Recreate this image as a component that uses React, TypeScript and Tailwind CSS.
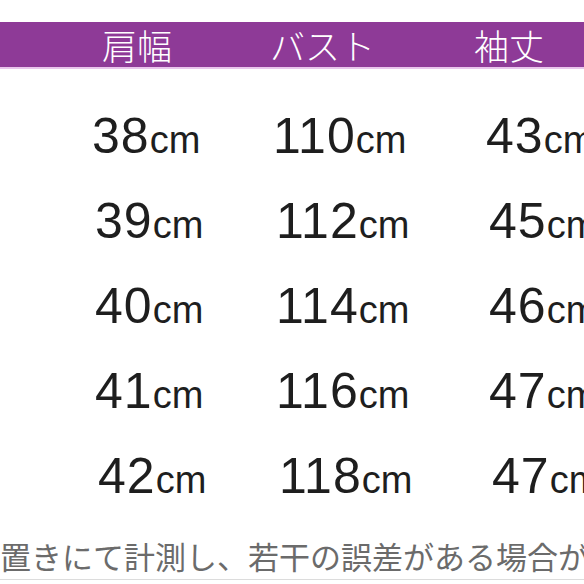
const rows = [
  { pad: 'pl-[92px]', shoulder: '38', bust: '110', sleeve: '43' },
  { pad: 'pl-[95px]', shoulder: '39', bust: '112', sleeve: '45' },
  { pad: 'pl-[95px]', shoulder: '40', bust: '114', sleeve: '46' },
  { pad: 'pl-[95px]', shoulder: '41', bust: '116', sleeve: '47' },
  { pad: 'pl-[98px]', shoulder: '42', bust: '118', sleeve: '47' },
]

function Value({ n }: { n: string }) {
  return (
    <span className="whitespace-nowrap">
      <span className="text-[50px] tracking-[1px]">{n}</span>
      <span className="text-[38px]">cm</span>
    </span>
  )
}

export default function App() {
  return (
    <div className="w-[584px] h-[584px] overflow-hidden bg-white flex flex-col">
      <div className="h-[22px] shrink-0" />

      <div className="h-[47px] shrink-0 bg-[#8e3a97] border-b-2 border-[#e9c6ec] flex items-center pl-[102px] text-white text-[35px] leading-none font-['Noto_Sans_CJK_JP',sans-serif] font-light">
        <div className="w-[168px] shrink-0">肩幅</div>
        <div className="w-[204px] shrink-0">バスト</div>
        <div className="shrink-0">袖丈</div>
      </div>

      <div className="pt-[24px] flex flex-col text-[#1e1e1e] font-['Liberation_Sans',Arial,sans-serif]">
        {rows.map((r) => (
          <div key={r.shoulder + r.bust} className={`h-[85px] flex items-center leading-none ${r.pad}`}>
            <div className="w-[181px] shrink-0">
              <Value n={r.shoulder} />
            </div>
            <div className="w-[213px] shrink-0">
              <Value n={r.bust} />
            </div>
            <div className="shrink-0">
              <Value n={r.sleeve} />
            </div>
          </div>
        ))}
      </div>

      <div className="mt-[22px] border-b border-[#dcdcdc] pb-[8px] whitespace-nowrap text-[31px] leading-none text-[#6b6b6b] font-['Noto_Sans_CJK_JP',sans-serif]">
        置きにて計測し、若干の誤差がある場合がございます。
      </div>
    </div>
  )
}
